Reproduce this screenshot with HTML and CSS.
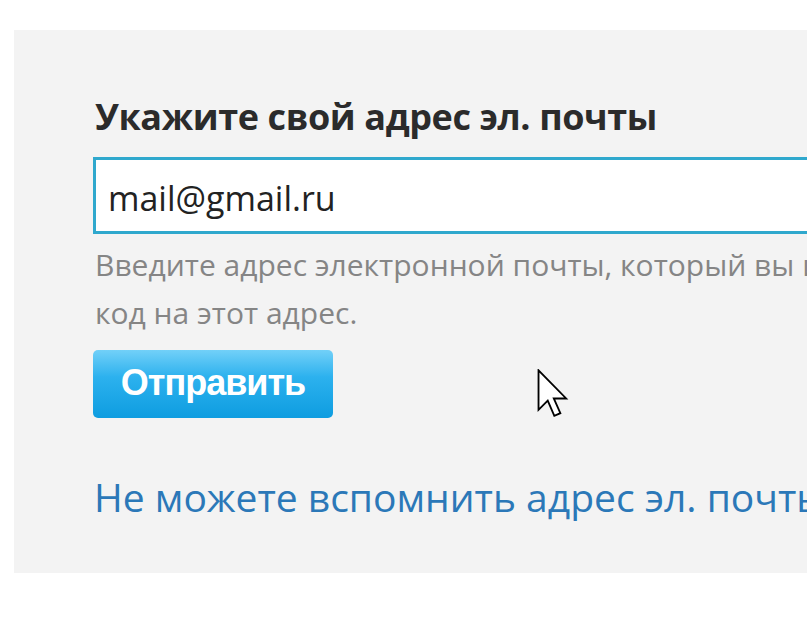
FILE: index.html
```html
<!DOCTYPE html>
<html lang="ru">
<head>
    <meta charset="UTF-8">
    <meta name="viewport" content="width=device-width, initial-scale=1.0">
    <link rel="stylesheet" href="styles.css">
</head>
<body>
    <div class="panel">
        <div class="form">
            <div class="form-title">Укажите свой адрес эл. почты</div>
            <div class="form-input">mail@gmail.ru</div>
            <div class="form-hint">Введите адрес электронной почты, который вы использовали, и мы отправим<br>код на этот адрес.</div>
            <div class="form-actions">
                <button class="form-button">Отправить</button>
                <svg class="cursor" width="34" height="50" viewBox="0 0 12 19">
                    <path d="M0.5 0.5 L0.5 15.5 L4 12 L6.5 17.8 L8.8 16.8 L6.3 11.2 L11 11.2 Z" fill="#fff" stroke="#000" stroke-width="0.7" stroke-linejoin="miter"/>
                </svg>
            </div>
            <a class="form-link" href="#">Не можете вспомнить адрес эл. почты?</a>
        </div>
    </div>
</body>
</html>
```

FILE: styles.css
```css
html, body {
    margin: 0;
    background: #fff;
    overflow: hidden;
    height: 625px;
}
.panel {
    margin: 30px 0 0 14px;
    width: 1300px;
    height: 543px;
    background: #f3f3f3;
    box-sizing: border-box;
    padding: 65px 0 0 79px;
    font-family: "Open Sans", sans-serif;
}
.form {
    width: 1100px;
}
.form-title {
    font-weight: bold;
    font-size: 36px;
    letter-spacing: -0.4px;
    color: #2b2b2b;
    line-height: 44px;
    margin-left: 2px;
}
.form-input {
    margin-top: 18px;
    height: 77px;
    box-sizing: border-box;
    border: 3px solid #2fa8cd;
    background: #fff;
    font-size: 34px;
    color: #222;
    padding: 5px 0 0 12px;
    line-height: 66px;
}
.form-hint {
    margin-top: 7px;
    font-size: 30px;
    line-height: 48px;
    color: #858585;
    white-space: nowrap;
    margin-left: 2px;
}
.form-actions {
    position: relative;
    margin-top: 13px;
    height: 68px;
}
.form-button {
    width: 240px;
    height: 68px;
    border: none;
    border-radius: 5px;
    background: linear-gradient(#72d0f8, #2cb1ee 40%, #0e9de0);
    color: #fff;
    font-family: "Liberation Sans", Arial, sans-serif;
    font-weight: bold;
    font-size: 36px;
    letter-spacing: -1px;
    padding: 0 0 2px;
}
.cursor {
    position: absolute;
    left: 443px;
    top: 19px;
}
.form-link {
    display: block;
    margin-top: 53px;
    font-size: 39px;
    line-height: 52px;
    color: #2b78b8;
    text-decoration: none;
    white-space: nowrap;
    margin-left: 1px;
}
```
